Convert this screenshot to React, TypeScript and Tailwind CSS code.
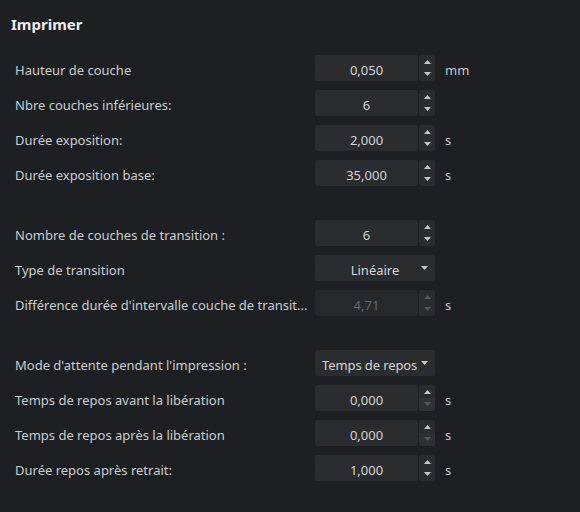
type Spin = { value: string; unit?: string; disabled?: boolean; downOff?: boolean };

function Caret({ dim, up }: { dim?: boolean; up?: boolean }) {
  return (
    <svg width="7" height="4" viewBox="0 0 7 4" className={up ? "" : "rotate-180"}>
      <path d="M0 4 L3.5 0 L7 4 Z" fill={dim ? "#55575b" : "#c4c6c9"} />
    </svg>
  );
}

function SpinBox({ value, disabled, downOff }: Spin) {
  return (
    <div className="flex h-[26px] w-[120px] gap-px">
      <div
        className={
          "flex w-[103px] items-center justify-center rounded-[3px] pt-[5px] " +
          (disabled ? "bg-[#27282b] text-[#66686c]" : "bg-[#2b2c2f] text-[#d2d4d7]")
        }
      >
        {value}
      </div>
      <div className="flex w-[16px] flex-col overflow-hidden rounded-[3px] bg-[#2b2c2f]">
        <div className="flex flex-1 items-center justify-center pt-[1px]">
          <Caret up dim={disabled} />
        </div>
        <div
          className={
            "flex flex-1 items-center justify-center pb-[1px] " + (downOff ? "bg-[#303134]" : "")
          }
        >
          <Caret dim={disabled || downOff} />
        </div>
      </div>
    </div>
  );
}

function Select({ value, align }: { value: string; align?: "left" }) {
  return (
    <div
      className={
        "relative flex h-[26px] w-[120px] items-center rounded-[3px] bg-[#2b2c2f] pt-[5px] text-[#d2d4d7] " +
        (align === "left" ? "pl-[7px] tracking-[-0.1px]" : "justify-center")
      }
    >
      {value}
      <div className="absolute right-[7px] top-[11px] flex">
        <Caret />
      </div>
    </div>
  );
}

function Row({ label, children, unit }: { label: string; children: React.ReactNode; unit?: string }) {
  return (
    <div className="flex h-[26px] items-center">
      <div className="w-[300px] whitespace-nowrap pt-[6px]">{label}</div>
      {children}
      {unit && <span className="ml-[10px] pt-[5px] text-[#c4c6c9]">{unit}</span>}
    </div>
  );
}

export default function App() {
  return (
    <div className="h-[512px] w-[580px] overflow-hidden bg-[#1e1f22] font-['Noto_Sans','Open_Sans',sans-serif] text-[13px] text-[#c9ccd0]">
      <div className="pl-[11px] pt-[14px] text-[15px] font-bold leading-[20px] text-[#eceef0]">Imprimer</div>
      <div className="mt-[21px] flex flex-col gap-[9px] pl-[15px]">
        <Row label="Hauteur de couche" unit="mm">
          <SpinBox value="0,050" />
        </Row>
        <Row label="Nbre couches inférieures:">
          <SpinBox value="6" />
        </Row>
        <Row label="Durée exposition:" unit="s">
          <SpinBox value="2,000" />
        </Row>
        <Row label="Durée exposition base:" unit="s">
          <SpinBox value="35,000" />
        </Row>
        <div className="mt-[25px] flex flex-col gap-[9px]">
          <Row label="Nombre de couches de transition :">
            <SpinBox value="6" />
          </Row>
          <Row label="Type de transition">
            <Select value="Linéaire" />
          </Row>
          <Row label="Différence durée d'intervalle couche de transit..." unit="s">
            <SpinBox value="4,71" disabled />
          </Row>
        </div>
        <div className="mt-[25px] flex flex-col gap-[9px]">
          <Row label="Mode d'attente pendant l'impression :">
            <Select value="Temps de repos" align="left" />
          </Row>
          <Row label="Temps de repos avant la libération" unit="s">
            <SpinBox value="0,000" downOff />
          </Row>
          <Row label="Temps de repos après la libération" unit="s">
            <SpinBox value="0,000" downOff />
          </Row>
          <Row label="Durée repos après retrait:" unit="s">
            <SpinBox value="1,000" />
          </Row>
        </div>
      </div>
    </div>
  );
}
